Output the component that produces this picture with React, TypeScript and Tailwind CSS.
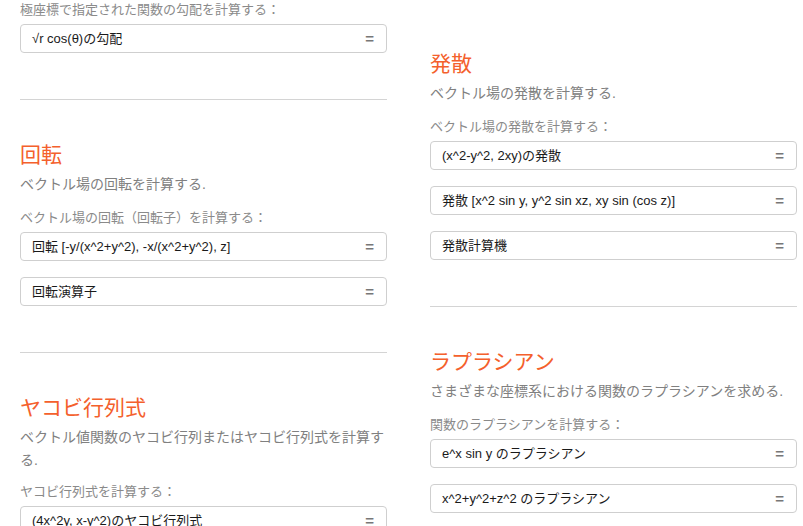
const font = { fontFamily: '"Liberation Sans", "Noto Sans CJK JP", sans-serif' };

function CalcBox({ text }: { text: string }) {
  return (
    <div className="flex h-[29px] items-center justify-between rounded-[4px] border border-[#cfcfcf] bg-white pl-[11px] pr-[12px]">
      <span className="text-[13px] text-[#1a1a1a]">{text}</span>
      <span className="text-[15px] font-bold leading-none text-[#777]">=</span>
    </div>
  );
}

function Section({
  title,
  desc,
  label,
  boxes,
  tight,
}: {
  title: string;
  desc: string;
  label: string;
  boxes: string[];
  tight?: boolean;
}) {
  return (
    <div>
      <h2 className="text-[21px] leading-[28px] font-normal text-[#f4602c]">{title}</h2>
      <p className="mt-[4px] text-[14px] leading-[23px] text-[#808080]">{desc}</p>
      <Block label={label} boxes={boxes} tight={tight} />
    </div>
  );
}

function Block({ label, boxes, tight }: { label: string; boxes: string[]; tight?: boolean }) {
  return (
    <div className={tight ? 'mt-[10px]' : 'mt-[12px]'}>
      <p className="text-[13px] leading-[20px] text-[#8a8a8a]">{label}</p>
      <div className="mt-[4px] flex flex-col gap-[16px]">
        {boxes.map((b) => (
          <CalcBox key={b} text={b} />
        ))}
      </div>
    </div>
  );
}

function Divider() {
  return <hr className="mt-[46px] mb-[41px] border-0 border-t border-[#d4d4d4]" />;
}

export default function App() {
  return (
    <div className="h-[526px] w-[803px] overflow-hidden bg-white" style={font}>
      <div className="flex gap-[43px] pl-[20px]">
        <div className="w-[367px] shrink-0">
          <div className="-mt-[12px]">
            <Block label="極座標で指定された関数の勾配を計算する：" boxes={['√r cos(θ)の勾配']} />
          </div>
          <Divider />
          <Section
            title="回転"
            desc="ベクトル場の回転を計算する."
            label="ベクトル場の回転（回転子）を計算する："
            boxes={['回転 [-y/(x^2+y^2), -x/(x^2+y^2), z]', '回転演算子']}
          />
          <Divider />
          <Section
            title="ヤコビ行列式"
            desc="ベクトル値関数のヤコビ行列またはヤコビ行列式を計算する."
            label="ヤコビ行列式を計算する："
            boxes={['(4x^2y, x-y^2)のヤコビ行列式']}
            tight
          />
        </div>
        <div className="w-[367px] shrink-0 pt-[50px]">
          <Section
            title="発散"
            desc="ベクトル場の発散を計算する."
            label="ベクトル場の発散を計算する："
            boxes={['(x^2-y^2, 2xy)の発散', '発散 [x^2 sin y, y^2 sin xz, xy sin (cos z)]', '発散計算機']}
          />
          <Divider />
          <Section
            title="ラプラシアン"
            desc="さまざまな座標系における関数のラプラシアンを求める."
            label="関数のラプラシアンを計算する："
            boxes={['e^x sin y のラプラシアン', 'x^2+y^2+z^2 のラプラシアン']}
          />
        </div>
      </div>
    </div>
  );
}
